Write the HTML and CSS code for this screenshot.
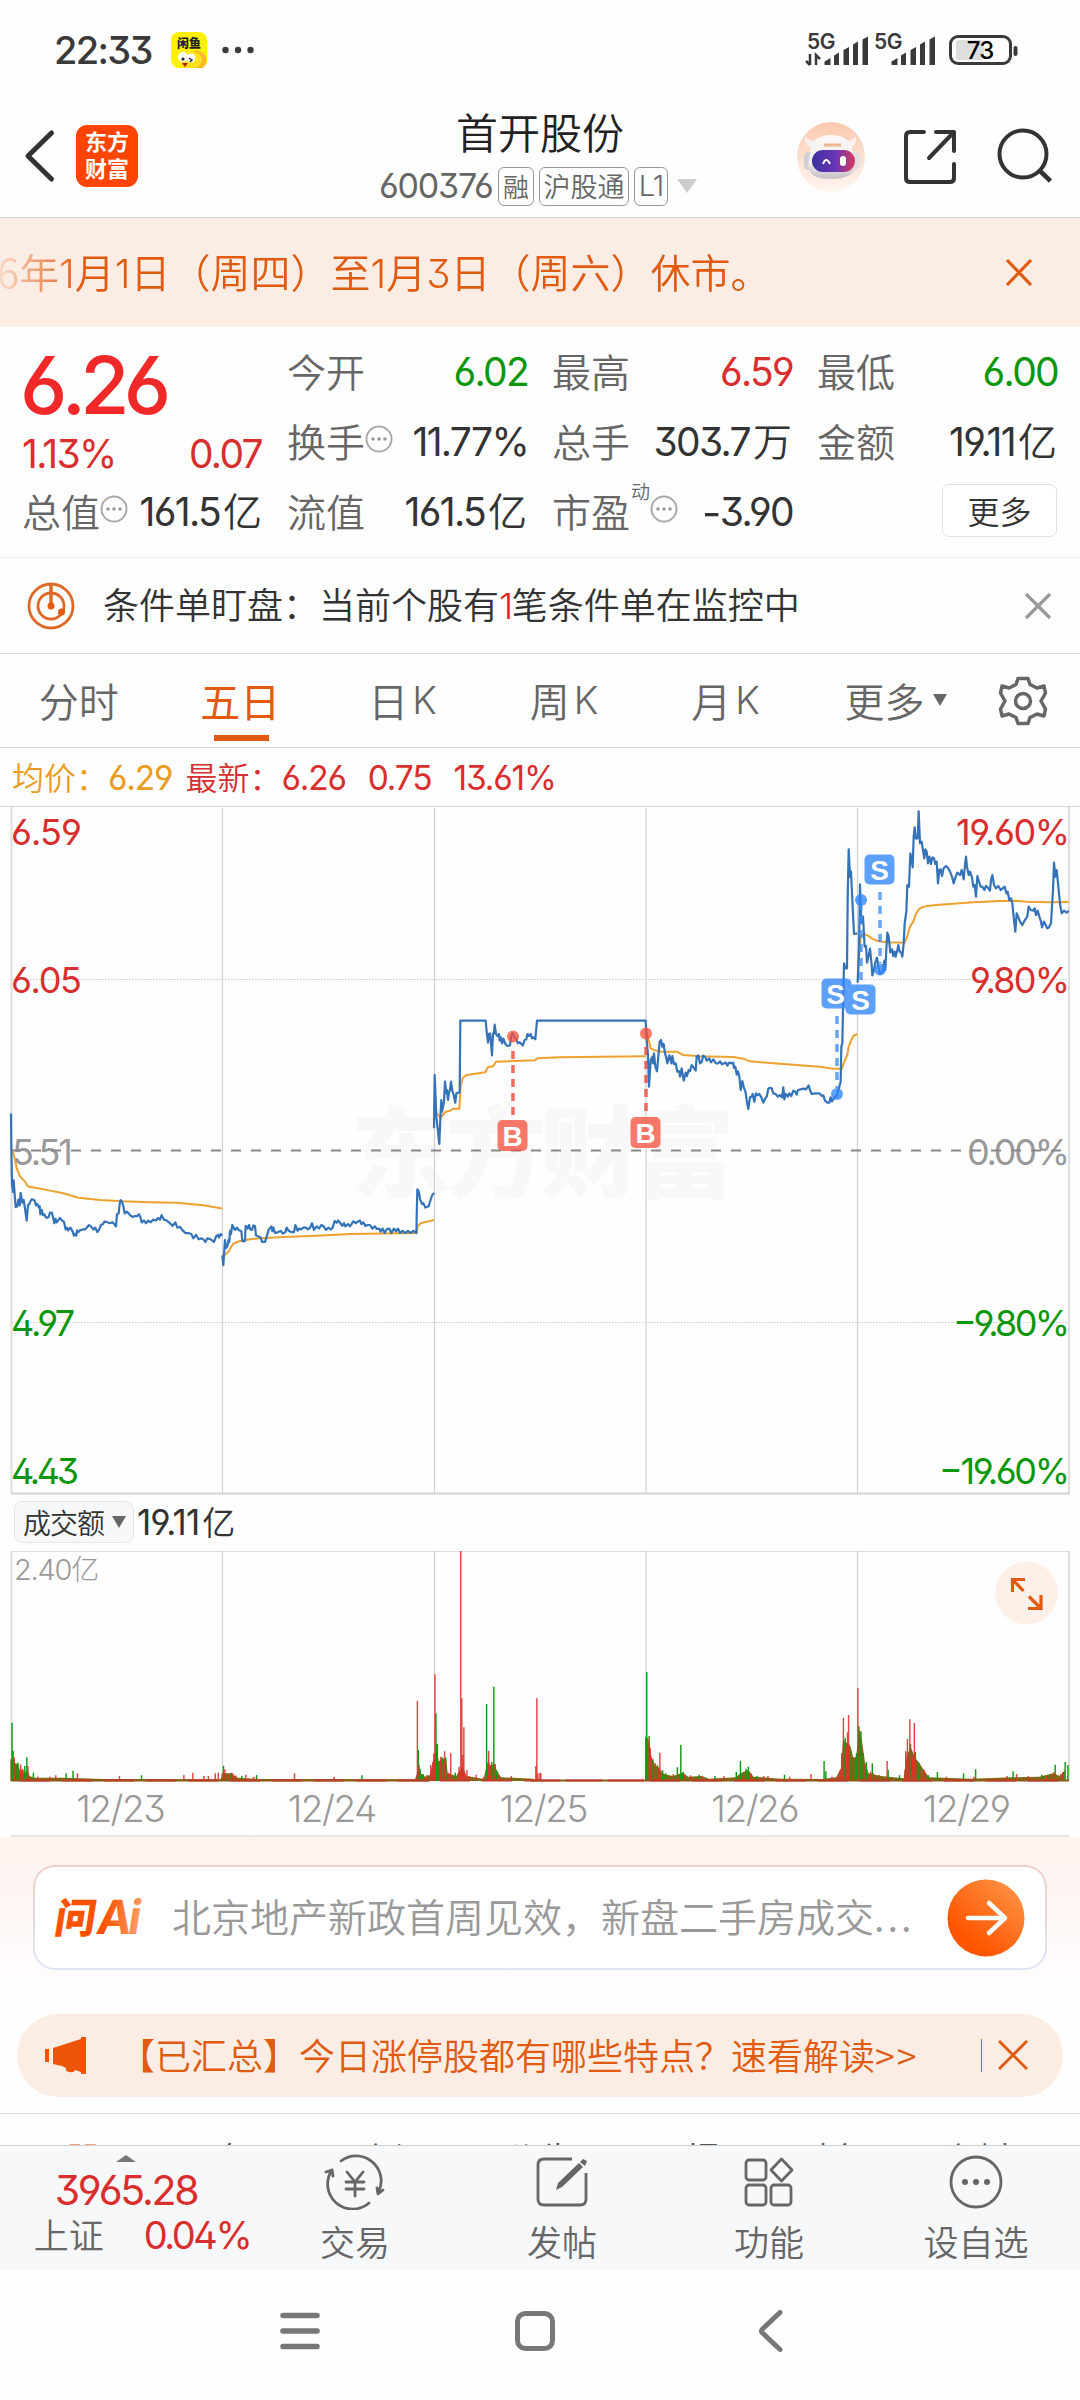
FILE: index.html
```html
<!DOCTYPE html>
<html lang="zh-CN">
<head>
<meta charset="utf-8">
<title>首开股份 600376</title>
<link rel="stylesheet" href="styles.css">
</head>
<body>
<div class="status">
  <span class="clock n">22:33</span>
  <svg class="app" width="36" height="36" viewBox="0 0 36 36"><rect width="36" height="36" rx="8" fill="#fff100"/><path d="M22 19a10 10 0 0 1 10 17H12z" fill="#ffb81f"/><ellipse cx="20" cy="28" rx="11" ry="9" fill="#ffe21a"/><circle cx="12" cy="25" r="5" fill="#fff"/><circle cx="20" cy="26" r="4.500" fill="#fff"/><circle cx="12" cy="27" r="1.600" fill="#222"/><path d="M18 26l3 2-2 2" stroke="#222" fill="none" stroke-width="1.400"/><path d="M11 31h6l-3 4z" fill="#b3200c"/><text x="18" y="15.500" text-anchor="middle" class="app-name">闲鱼</text></svg>
  <svg class="dots" width="32" height="8" viewBox="0 0 32 8"><g fill="#3a3a3a"><circle cx="3.500" cy="4" r="3.200"/><circle cx="16" cy="4" r="3.200"/><circle cx="28.500" cy="4" r="3.200"/></g></svg>
  <svg class="signals" width="220" height="40" viewBox="803 30 220 40">
    <g fill="#3a3a3a">
      <text x="807" y="48.500" class="fiveg">5G</text><text x="874" y="48.500" class="fiveg">5G</text>
      <path d="M810 54v11M806 61l4 4M816 65V55l4 4" stroke="#3a3a3a" stroke-width="2.500" fill="none"/>
      <path id="bars" d="M824.500 65v-3.500l6-3.500v7zM834 65V55.500l5-3V65zM843.500 65V50l5.500-3v18zM853 65V44.500l5-3V65zM862.500 65V39.500l5.500-3V65z"/>
      <use href="#bars" x="67"/>
    </g>
    <rect x="956" y="40" width="28" height="20" rx="3" fill="#dedede"/>
    <rect x="950.500" y="36.500" width="60" height="27" rx="7.500" fill="none" stroke="#3a3a3a" stroke-width="3"/>
    <rect x="1013.500" y="46" width="4" height="10" rx="2" fill="#3a3a3a"/>
    <text x="980" y="59" text-anchor="middle" class="batt">73</text>
  </svg>
</div>

<header class="head">
  <svg class="back" width="32" height="54" viewBox="0 0 32 54"><path d="M27.500 4 4 27l23.500 23" fill="none" stroke="#333" stroke-width="5" stroke-linecap="round" stroke-linejoin="round"/></svg>
  <div class="logo">东方<br>财富</div>
  <div class="title">
    <h1>首开股份</h1>
    <div class="code"><span class="n">600376</span><i class="t1">融</i><i class="t2">沪股通</i><i class="t3 n">L1</i><svg width="20" height="14" viewBox="0 0 20 14"><path d="M0 0h20L10 14z" fill="#ccc"/></svg></div>
  </div>
  <svg class="robot" width="68" height="70" viewBox="0 0 68 70">
    <defs><linearGradient id="rb" x2="0" y2="1"><stop stop-color="#fdc9ae"/><stop offset="1" stop-color="#fff6f2"/></linearGradient><linearGradient id="face"><stop stop-color="#3b2f9e"/><stop offset=".55" stop-color="#6a35b8"/><stop offset="1" stop-color="#d83a5c"/></linearGradient><linearGradient id="shell" x2="0" y2="1"><stop stop-color="#fbf8f7"/><stop offset=".6" stop-color="#f3efef"/><stop offset="1" stop-color="#c4bfc6"/></linearGradient></defs>
    <ellipse cx="34" cy="35" rx="34" ry="35" fill="url(#rb)"/>
    <path d="M8 14q-1 9 6 12l7-7q-9 1-13-5zM59 14q1 9-6 12l-7-7q9 1 13-5z" fill="#f7f2f1"/>
    <rect x="7" y="30" width="9" height="18" rx="4.500" fill="#d3ced6"/><rect x="54" y="30" width="9" height="18" rx="4.500" fill="#e3dee2"/>
    <path d="M13 32q1-19 21-19t22 19l3 11q-2 14-25 14T11 43z" fill="url(#shell)"/>
    <rect x="15" y="28" width="43" height="22" rx="11" fill="url(#face)"/>
    <path d="M26 42q3-8 7 0" fill="none" stroke="#fff" stroke-width="2"/><rect x="43" y="34" width="6" height="10" rx="3" fill="#fff"/>
    <path d="M27 23h17" stroke="#e9b78c" stroke-width="3"/>
  </svg>
  <svg class="share" width="56" height="58" viewBox="902 128 56 58"><path d="M924 132h-14q-4 0-4 4v42q0 4 4 4h40q4 0 4-4v-14M936 132h18v19M954 132l-25 26" fill="none" stroke="#333" stroke-width="4" stroke-linecap="round" stroke-linejoin="round"/></svg>
  <svg class="search" width="58" height="58" viewBox="996 128 58 58"><circle cx="1023" cy="154" r="23.500" fill="none" stroke="#333" stroke-width="4"/><path d="M1039 170l11.500 11" stroke="#333" stroke-width="4.500"/></svg>
</header>

<div class="notice"><p>6年<b class="n">1</b>月<b class="n">1</b>日（周四）至<b class="n">1</b>月<b class="n">3</b>日（周六）休市。</p>
  <svg width="30" height="30" viewBox="0 0 30 30"><path d="M3 2l24 25M27 2 3 27" stroke="#e05a10" stroke-width="3.200"/></svg></div>

<section class="quote">
  <div class="col c1">
    <strong class="price n">6.26</strong>
    <div class="row r2"><span class="red n">1.13%</span><span class="red n">0.07</span></div>
    <div class="row"><span>总值</span><svg class="info" viewBox="0 0 28 28"><use href="#inf"/></svg><span class="v"><b class="n">161.5</b>亿</span></div>
  </div>
  <div class="col">
    <div class="row"><span>今开</span><span class="v green n">6.02</span></div>
    <div class="row"><span>换手</span><svg class="info" viewBox="0 0 28 28"><g id="inf"><circle cx="14" cy="14" r="12.500" fill="none" stroke="#aaa" stroke-width="2"/><g fill="#999"><circle cx="8" cy="14" r="1.800"/><circle cx="14" cy="14" r="1.800"/><circle cx="20" cy="14" r="1.800"/></g></g></svg><span class="v n">11.77%</span></div>
    <div class="row"><span>流值</span><span class="v"><b class="n">161.5</b>亿</span></div>
  </div>
  <div class="col">
    <div class="row"><span>最高</span><span class="v red n">6.59</span></div>
    <div class="row"><span>总手</span><span class="v"><b class="n">303.7</b>万</span></div>
    <div class="row"><span>市盈</span><sup>动</sup><svg class="info" viewBox="0 0 28 28"><use href="#inf"/></svg><span class="v n"><i class="neg">−</i>3.90</span></div>
  </div>
  <div class="col">
    <div class="row"><span>最低</span><span class="v green n">6.00</span></div>
    <div class="row"><span>金额</span><span class="v"><b class="n">19.11</b>亿</span></div>
    <div class="row"><button class="more">更多</button></div>
  </div>
</section>

<div class="alert">
  <svg width="48" height="48" viewBox="0 0 48 48"><g fill="none" stroke="#dc6a26" stroke-width="2.800"><circle cx="24" cy="24" r="22"/><circle cx="24" cy="24" r="13"/></g><path d="M24 2v22" stroke="#dc6a26" stroke-width="3.500"/><circle cx="24" cy="24" r="3.500" fill="#e05a10"/><circle cx="34.500" cy="30" r="3.500" fill="#e05a10"/></svg>
  <p>条件单盯盘：当前个股有<em class="n">1</em>笔条件单在监控中</p>
  <svg width="28" height="28" viewBox="0 0 28 28"><path d="M2 2l24 24M26 2 2 26" stroke="#999" stroke-width="3.200"/></svg>
</div>

<nav class="tabs">
  <span>分时</span><span class="on">五日</span><span>日<b class="n">K</b></span><span>周<b class="n">K</b></span><span>月<b class="n">K</b></span><span>更多<svg width="14" height="12" viewBox="0 0 14 12"><path d="M0 0h14L7 12z" fill="#666"/></svg></span>
  <svg class="gear" width="50" height="50" viewBox="-25 -25 50 50"><g fill="none" stroke="#666" stroke-width="3.500" stroke-linejoin="round"><path d="M-5-22.500H5L7-16.500 14-13l7-2 1.500 7-4.500 8 4.500 8L21 15l-7-2-7 3.500-2 6H-5l-2-6-7-3.500-7 2-1.500-7 4.500-8-4.500-8L-21-15l7 2 7-3.500z"/><circle r="7.500"/></g></svg>
</nav>

<div class="legend"><span class="avg">均价：<b class="n">6.29</b></span><span class="last">最新：<b class="n">6.26</b><b class="n">0.75</b><b class="n">13.61%</b></span></div>

<svg class="chart" width="1080" height="690" viewBox="0 806 1080 690">
  <text x="543" y="1190" class="mark" text-anchor="middle" textLength="384">东方财富</text>
  <path d="M0 806.500H1080" stroke="#d6d6d6"/>
  <path d="M11.500 807V1494M1069 807V1494" stroke="#ddd" stroke-width="2"/>
  <path d="M222.500 808V1493M434.500 808V1493M646 808V1493M857.500 808V1493" stroke="#d0d0d0" stroke-width="1.200"/>
  <path d="M11 1493.500H1070" stroke="#d3d3d3" stroke-width="2"/>
  <path d="M12 979.500H1068M12 1322.500H1068" stroke="#ccc" stroke-dasharray="1.500 1.500"/>
  <g class="lbl">
    <g fill="#d92e2e"><text x="11" y="845" textLength="71">6.59</text><text x="11" y="993" textLength="71">6.05</text><text x="956" y="845" textLength="114">19.60%</text><text x="970" y="993" textLength="100">9.80%</text></g>
    <g fill="#999"><text x="12" y="1165" textLength="61">5.51</text><text x="967" y="1165" textLength="103">0.00%</text></g>
    <g fill="#0c960c"><text x="11" y="1336" textLength="64">4.97</text><text x="11" y="1484" textLength="68">4.43</text><text x="953" y="1336" textLength="117">−9.80%</text><text x="939" y="1484" textLength="131">−19.60%</text></g>
  </g>
  <path d="M11 1150.500H1068" stroke="#888" stroke-width="2" stroke-dasharray="10 10"/>
  <g fill="none" stroke-linejoin="round">
    <g stroke="#eda12f" stroke-width="2">
      <g transform="translate(0 800) scale(.33333 .44643)">
        <path class="ln" d="M33 780Q42 790 50 825L60 843 76 856 84 866 110 869 150 875 190 881 235 891 300 896 370 899 450 901 530 902 570 905 610 908 667 915M667 1020 676 1018 685 1012 692 1003 700 994 715 989 740 985 770 982 850 979 950 976 1050 972 1250 970 1253 955 1262 948 1302 941"/>
      </g>
      <path class="ln" transform="translate(420 900) scale(.33333)" d="M50 640 62 653 76 636 90 632 100 626 118 626 122 560 128 535 138 526 160 522 196 517 204 502 220 498 228 485 345 481 352 475 420 472 677 469M680 400 686 420 692 445 702 450 720 455 770 455 790 465 840 469 940 471 970 476 990 484 1060 490 1200 500 1240 506 1266 506 1275 480 1282 465 1286 440 1292 425 1300 408 1312 402"/>
      <path class="ln" transform="translate(740 790) scale(.33333)" d="M354 560 357 500 362 440 372 432 384 437 395 445 410 452 440 457 494 458 503 435 510 410 520 395 526 375 536 358 550 350 580 346 640 341 700 337 780 333 820 332 860 335 930 337 986 336"/>
    </g>
    <g stroke="#3573b9" stroke-width="2.200">
      <path class="ln" transform="translate(0 800) scale(.33333 .44643)" d="M33 702 34 780 36 860 39 878 41 852 44 884 47 912 52 910 55 895 59 908 62 880 67 902 71 896 75 915 80 942 84 908 88 905 92 898 96 894 104 897 108 908 112 905 117 913 119 910 121 928 125 918 129 930 133 928 136 933 140 936 146 934 150 924 156 925 160 938 163 948 166 938 170 946 176 940 180 936 186 942 192 945 197 962 201 958 204 964 211 958 217 965 222 976 225 972 229 976 231 964 235 968 240 964 248 962 255 962 260 958 267 952 274 956 280 962 286 958 292 968 297 963 303 952 309 950 314 944 322 946 330 948 338 946 345 952 348 955 351 928 356 926 359 905 362 896 366 900 370 910 374 926 380 922 386 926 390 930 398 934 405 932 412 932 417 928 421 934 425 946 432 942 438 948 445 942 452 946 460 940 468 942 474 936 480 940 485 930 492 940 500 942 510 948 518 954 526 946 532 958 540 956 548 964 556 970 565 970 574 972 580 982 588 974 596 984 604 982 610 984 616 990 622 982 632 984 642 990 648 978 654 974 657 980 662 972 667 976M667 1020 670 1042 675 986 678 1004 682 1000 686 985 688 990 690 965 693 972 697 952 701 958 705 963 711 958 716 963 724 966 727 988 735 988 737 954 743 960 747 952 751 962 756 963 760 953 765 955 768 975 774 977 782 980 786 990 795 990 800 978 806 963 814 955 817 966 820 958 825 970 835 968 842 965 848 971 856 968 860 958 866 965 875 968 882 968 886 952 893 965 897 960 903 962 910 958 918 958 924 962 930 958 936 948 942 963 950 955 957 960 964 952 972 956 978 963 985 958 992 962 998 958 1004 943 1010 947 1015 942 1020 947 1027 954 1032 948 1036 955 1044 950 1050 955 1060 944 1068 948 1074 944 1080 942 1084 950 1090 946 1096 954 1104 952 1110 952 1117 960 1124 955 1131 961 1138 960 1142 967 1148 960 1154 970 1161 961 1168 960 1174 970 1182 960 1188 966 1194 960 1200 970 1208 965 1216 970 1224 965 1232 970 1240 965 1249 970 1252 872 1256 876 1260 894 1266 905 1270 903 1276 913 1286 910 1290 900 1296 886 1302 880"/>
      <path class="ln" transform="translate(420 900) scale(.33333)" d="M42 685 44 525 49 650 58 732 61 655 64 600 66 635 72 605 75 545 79 580 81 570 84 600 87 578 90 570 93 545 97 572 101 585 106 608 109 580 114 578 119 578 121 362 197 362 200 395 204 428 207 402 210 400 213 430 216 466 219 400 222 400 224 374 228 402 232 408 237 402 239 422 242 412 246 430 250 416 256 432 262 438 270 436 273 410 278 400 283 412 288 416 294 430 300 427 308 437 314 420 319 418 322 402 327 408 332 402 336 415 340 412 346 418 351 362 677 362 680 420 684 465 687 560 692 480 697 470 699 490 702 460 706 500 711 514 715 470 719 425 723 420 727 440 731 432 735 460 738 470 742 490 748 466 754 490 757 468 762 492 767 490 772 515 778 514 780 530 785 505 791 542 797 518 801 528 806 510 810 514 815 495 821 503 827 512 830 470 835 466 840 490 846 485 849 467 855 470 860 482 868 475 873 487 880 478 888 490 895 490 900 484 906 493 912 490 918 488 922 497 928 488 936 490 940 488 942 504 946 500 950 524 954 514 958 530 962 570 967 543 972 564 977 578 980 600 985 627 990 592 995 590 998 582 1003 605 1008 580 1012 585 1018 582 1024 592 1030 608 1036 595 1040 590 1045 566 1050 563 1055 565 1060 580 1067 582 1074 590 1080 585 1086 592 1090 562 1093 598 1098 582 1104 590 1108 580 1114 588 1120 572 1126 575 1130 584 1134 570 1142 568 1150 566 1158 568 1166 556 1170 570 1175 582 1186 580 1198 580 1206 588 1210 586 1215 602 1222 608 1228 608 1232 592 1236 604 1242 594 1250 588 1258 560 1262 545 1264 440 1267 430 1269 330 1272 190 1276 205 1281 205 1283 0 1286-152 1290-70 1293-85 1297 0 1302 102 1312 100"/>
      <path class="ln" transform="translate(740 790) scale(.33333)" d="M353 578 357 480 360 283 364 400 369 380 374 470 378 468 381 518 385 500 390 476 395 525 397 556 402 540 405 520 411 503 415 530 420 552 428 545 433 512 436 540 439 480 442 428 446 440 451 487 456 478 460 498 464 485 467 500 472 480 475 465 479 485 484 488 487 500 491 460 494 400 499 365 502 285 507 290 511 190 515 210 518 232 521 140 524 112 527 145 533 145 536 64 540 160 545 155 549 180 553 205 556 178 560 185 564 220 568 200 573 222 577 202 582 205 586 222 590 215 594 280 598 240 602 238 606 258 611 235 618 228 625 235 630 245 636 260 641 280 646 262 652 248 660 255 665 240 671 268 675 225 678 200 681 230 686 255 690 245 696 262 700 290 704 285 708 320 712 258 717 275 722 290 727 290 733 300 738 288 745 295 750 302 753 270 757 255 762 285 768 295 775 288 782 300 788 295 794 290 799 310 803 305 808 330 813 325 817 340 822 390 826 425 830 370 834 378 838 390 842 398 847 405 852 395 858 385 862 380 866 350 872 360 880 362 884 355 888 375 893 362 898 380 903 395 906 412 912 395 917 405 922 415 927 412 933 400 936 350 939 300 942 218 946 260 950 240 955 290 960 340 965 370 972 362 980 368 986 362"/>
    </g>
  </g>
  <g class="buy"><path d="M513 1051V1116M646 1047V1113" class="stem"/><circle cx="513" cy="1036.500" r="6"/><circle cx="646" cy="1033.500" r="6"/><rect x="497.500" y="1120" width="30" height="31" rx="5"/><rect x="630.500" y="1117" width="30" height="31" rx="5"/></g>
  <g class="sell"><path d="M837 1016V1088M861 980V906M880 892V963" class="stem"/><circle cx="837" cy="1094" r="6"/><circle cx="861" cy="900" r="6"/><circle cx="880" cy="969.500" r="6"/><rect x="821.500" y="978.500" width="30" height="30" rx="5"/><rect x="845.500" y="984.500" width="30" height="30" rx="5"/><rect x="864.500" y="854.500" width="30" height="30" rx="5"/></g>
  <g class="mk"><text x="512.500" y="1145.500">B</text><text x="645.500" y="1143">B</text><text x="835.500" y="1004">S</text><text x="860.500" y="1010">S</text><text x="879.500" y="880">S</text></g>
</svg>

<div class="volbar"><button>成交额<svg width="14" height="12" viewBox="0 0 14 12"><path d="M0 0h14L7 12z" fill="#666"/></svg></button><span><b class="n">19.11</b>亿</span></div>

<div class="vol">
<svg width="1080" height="232" viewBox="0 1551 1080 232">
  <path d="M11 1551.500H1070" stroke="#ddd"/>
  <path d="M11.500 1551V1781M1069 1551V1781" stroke="#ddd" stroke-width="2"/>
  <path d="M222.500 1551V1781M434.500 1551V1781M646 1551V1781M857.500 1551V1781" stroke="#d0d0d0" stroke-width="1.200"/>
  <g transform="translate(0 1480) scale(.34437 .33333)">
    <path fill="#7d6a14" d="M30 903V838H42L45 855 52 850 58 872 66 868 70 880 80 870 86 888 100 893 190 893 300 897 640 898 650 880 670 880 690 893 750 897 1205 898 1216 865 1224 882 1235 890 1248 885 1256 850 1268 800 1274 845 1284 835 1296 838 1300 880 1325 888 1335 870 1345 860 1354 888 1405 897 1412 860 1418 840 1424 858 1436 852 1444 875 1455 892 1550 896V903z"/>
    <path class="g" d="M35 903V728M38 903V812M46 903V850M52 903V848M72 903V858M78 903V832M97 903V878M192 903V880M212 903V872M411 903V886M649 903V857M672 903V878M702 903V888M745 903V885M1051 903V886M1215 903V810M1220 903V866M1229 903V882M1266 903V700M1270 903V792M1276 903V842M1284 903V832M1294 903V832M1322 903V878M1413 903V672M1428 903V846M1434 903V620M1443 903V872"/>
    <path class="r" d="M41 903V832M60 903V853M66 903V868M81 903V858M110 903V890M145 903V890M162 903V886M225 903V880M347 903V888M534 903V885M560 903V878M592 903V888M605 903V888M625 903V880M634 903V878M645 903V880M653 903V868M666 903V882M676 903V880M685 903V886M714 903V884M737 903V890M855 903V880M970 903V890M1212 903V662M1217 903V855M1240 903V885M1251 903V855M1257 903V846M1260 903V820M1263 903V583M1280 903V830M1287 903V850M1291 903V814M1302 903V878M1309 903V820M1333 903V860M1338 903V213M1341 903V655M1344 903V825M1347 903V742M1350 903V880M1356 903V870M1363 903V888M1383 903V884M1404 903V890M1419 903V812M1423 903V855M1438 903V852M1449 903V885M1485 903V888M1556 903V858M1559 903V655M1562 903V880M1568 903V880"/>
  </g>
  <g transform="translate(540 1480) scale(.34437 .33333)">
    <path fill="#7d6a14" d="M305 903V768L318 790 324 835 334 855 345 865 360 882 385 888 415 878 430 890 470 888 490 896 568 892 585 878 605 870 620 890 700 896 820 897 860 892 874 865 880 780 892 790 902 800 910 835 918 830 928 745 936 790 944 850 954 880 990 888 1056 895 1064 830 1076 800 1090 835 1102 850 1116 872 1130 892 1250 896 1370 892 1450 890 1490 880 1510 888 1524 870V903z"/>
    <path class="g" d="M310 903V576M317 903V768M328 903V838M341 903V856M356 903V870M365 903V880M399 903V862M409 903V794M416 903V876M462 903V884M508 903V888M570 903V876M582 903V843M598 903V866M605 903V860M630 903V888M710 903V884M825 903V843M830 903V874M886 903V774M898 903V794M904 903V832M911 903V832M919 903V820M926 903V738M932 903V754M939 903V820M948 903V846M965 903V850M1011 903V870M1044 903V886M1076 903V792M1090 903V816M1100 903V848M1128 903V886M1154 903V876M1230 903V880M1265 903V868M1374 903V874M1457 903V884M1496 903V854M1525 903V846M1533 903V855"/>
    <path class="r" d="M2 903V878M313 903V774M320 903V805M324 903V832M335 903V850M345 903V862M348 903V818M387 903V882M420 903V882M437 903V886M470 903V888M534 903V888M612 903V880M650 903V888M662 903V888M725 903V890M787 903V882M848 903V890M865 903V888M872 903V870M876 903V820M881 903V714M889 903V800M893 903V757M896 903V705M923 903V624M944 903V852M960 903V875M968 903V880M985 903V885M1008 903V843M1060 903V870M1062 903V814M1067 903V777M1071 903V830M1074 903V718M1082 903V830M1087 903V729M1096 903V843M1108 903V870M1116 903V870M1180 903V890M1260 903V890M1356 903V888M1384 903V882M1418 903V888M1472 903V888M1492 903V876M1512 903V882M1519 903V876"/>
  </g>
  <path d="M11 1780.500H430M530 1780.500H1069" stroke="#8c5a14" stroke-width="2"/><path d="M530 1780.500H645M20 1780.500H1069" stroke="#c03a28" stroke-width="2" stroke-dasharray="30 12"/>
  <text x="14" y="1580" class="vmax"><tspan class="vn">2.40</tspan>亿</text>
  <circle cx="1026.500" cy="1593" r="31.500" fill="#fef0e8"/>
  <path d="M1012.500 1592V1579.500H1025M1013 1580l10.500 11M1028 1608.500H1041V1595M1040 1607.500l-11-11" fill="none" stroke="#e05a10" stroke-width="3.200"/>
</svg>
<div class="dates n"><span>12/23</span><span>12/24</span><span>12/25</span><span>12/26</span><span>12/29</span></div>
</div>

<section class="promo">
  <div class="ask">
    <svg class="ailogo" width="92" height="46" viewBox="0 0 92 46"><defs><linearGradient id="ag" gradientUnits="userSpaceOnUse" x1="0" y1="0" x2="90" y2="0"><stop offset=".6" stop-color="#ff5200"/><stop offset="1" stop-color="#ff9a62"/></linearGradient></defs><g transform="skewX(-9)" fill="url(#ag)"><text x="6" y="38" class="ai">问</text><text x="48" y="38.500" class="ai-en" textLength="44">Ai</text></g></svg>
    <p>北京地产新政首周见效，新盘二手房成交<span>...</span></p>
    <svg width="78" height="78" viewBox="0 0 78 78"><defs><linearGradient id="go" x1="1" y1="0" x2=".3" y2=".8"><stop stop-color="#ff9a4d"/><stop offset="1" stop-color="#ff5500"/></linearGradient></defs><circle cx="39" cy="39" r="38.500" fill="url(#go)"/><path d="M21 39h37M42 24l16 15-16 15" fill="none" stroke="#fff" stroke-width="4.500" stroke-linecap="round" stroke-linejoin="round"/></svg>
  </div>
  <div class="hot">
    <svg class="horn" width="42" height="38" viewBox="0 0 42 38"><path d="M0 12h4v13H0zM8 11 36 2V0h5v37h-5v-2l-6-2q-1 3-5 2-5 0-4-4l-4-2-9-2z" fill="#ec5406"/></svg>
    <p>【已汇总】今日涨停股都有哪些特点？速看解读<span>&gt;&gt;</span></p>
    <i></i>
    <svg width="30" height="32" viewBox="0 0 30 32"><path d="M1 1l28 28M29 1 1 29" stroke="#e05a10" stroke-width="3"/></svg>
  </div>
</section>

<div class="peek"><span class="cur">股吧</span><span>盘口</span><span>资讯</span><span>公告</span><span>研报</span><span>财务</span><span>资料</span></div>

<footer class="dock">
  <div class="index">
    <svg width="20" height="7" viewBox="0 0 20 7"><path d="M10 0l10 7H0z" fill="#777"/></svg>
    <b class="n">3965.28</b>
    <div><span>上证</span><b class="n">0.04%</b></div>
  </div>
  <div class="act"><svg width="62" height="56" viewBox="-31 -28 62 56"><g fill="none" stroke="#666" stroke-width="2.800" stroke-linecap="round" stroke-linejoin="round"><path d="M-14-21A25 25 0 0 1 24 9M14 21A25 25 0 0 1-23-12M-29-10l6-2 1 6M28 8l-5 4-1-6M-8-10l8 10 8-10M0 0v14M-9 0H9M-9 7H9"/></g></svg><span>交易</span></div>
  <div class="act"><svg width="62" height="56" viewBox="-31 -28 62 56"><g fill="none" stroke="#666" stroke-width="2.800"><path d="M10-23h-28q-6 0-6 6v34q0 6 6 6h36q6 0 6-6V-9"/></g><path d="M-6 8l2-7 21-20 4 4L0 5zM18-20l3-3 4 2-2 5z" fill="#666"/></svg><span>发帖</span></div>
  <div class="act"><svg width="62" height="56" viewBox="-31 -28 62 56"><g fill="none" stroke="#666" stroke-width="2.800"><rect x="-23" y="-22" width="20" height="20" rx="3"/><rect x="-23" y="3" width="20" height="20" rx="3"/><rect x="2" y="3" width="20" height="20" rx="3"/><path d="M12.500-23 23-12 12.500-1 2-12z" stroke-linejoin="round"/></g></svg><span>功能</span></div>
  <div class="act"><svg width="62" height="56" viewBox="-31 -28 62 56"><circle r="25" fill="none" stroke="#666" stroke-width="2.800"/><g fill="#666"><circle cx="-11" r="3"/><circle r="3"/><circle cx="11" r="3"/></g></svg><span>设自选</span></div>
</footer>

<div class="sysnav">
  <svg width="40" height="44" viewBox="0 0 40 44"><path d="M3 6.500h34M3 22h34M3 37.500h34" stroke="#777" stroke-width="5.500" stroke-linecap="round"/></svg>
  <svg width="40" height="44" viewBox="0 0 40 44"><rect x="2.500" y="4.500" width="35" height="35" rx="8" fill="none" stroke="#777" stroke-width="5"/></svg>
  <svg width="40" height="44" viewBox="0 0 40 44"><path d="M30 3.500 12.500 20q-2 2 0 4L30 40.500" fill="none" stroke="#777" stroke-width="5" stroke-linecap="round"/></svg>
</div>
</body>
</html>
```

FILE: styles.css
```css
* { box-sizing: border-box; margin: 0; padding: 0; }
body { width: 1080px; height: 2400px; overflow: hidden; background: #fefefe; color: #333; font-family: "Noto Sans CJK SC", sans-serif; font-weight: 350; line-height: 1; }
svg { display: block; flex: none; }
b, i, em { font-weight: inherit; font-style: normal; }
button { font: inherit; color: inherit; }
.n { font-family: Inter, "Noto Sans CJK SC", sans-serif; font-feature-settings: "ss01"; letter-spacing: -.04em; font-weight: 350; }
.red { color: #d92e2e; }
.green { color: #0c960c; }

.status { height: 100px; padding: 32px 57px 0 54px; display: flex; align-items: flex-start; }
.clock { width: 117px; font-size: 38px; line-height: 36px; color: #3a3a3a; letter-spacing: -.045em; font-weight: 450; }
.dots { margin: 14px 0 0 15px; }
.signals { margin: -2px 0 0 auto; }
.app-name { font: 900 12px "Noto Sans CJK SC"; fill: #222; }
.fiveg { font: 600 21px Inter; letter-spacing: -.5px; }
.batt { font: 450 24px Inter; letter-spacing: -1px; }

.head { height: 118px; border-bottom: 1px solid #d5d5d5; display: flex; align-items: flex-start; }
.back { margin: 29px 0 0 24px; }
.logo { width: 62px; height: 62px; margin: 25px 0 0 20px; border-radius: 11px; background: #ff4400; color: #fff; font-size: 22px; font-weight: 700; line-height: 27px; text-align: center; padding-top: 2px; }
.title { width: 350px; margin-left: 229px; }
h1 { font-weight: 350; font-size: 42px; line-height: 42px; padding: 10px 0 0 89px; color: #222; }
.code { display: flex; align-items: center; height: 40px; margin-top: 14px; color: #666; font-size: 28px; padding-left: 12px; }
.code .n { font-size: 34px; width: 119px; font-weight: 400; letter-spacing: -.035em; }
.code i, .code i.n { height: 39px; line-height: 35px; border: 1.500px solid #999; border-radius: 6px; text-align: center; margin-right: 5px; font-size: 26px; }
.code .t1 { width: 36px; }
.code .t2 { width: 90px; font-size: 27px; }
.code i.t3 { width: 34px; font-size: 29px; margin-right: 9px; font-weight: 350; }
.robot { margin: 22px 0 0 80px; }
.share { margin: 28px 0 0 37px; }
.search { margin: 28px 0 0 38px; }

.notice { height: 109px; background: #fcede4; color: #e05a10; display: flex; align-items: center; justify-content: space-between; padding-right: 46px; overflow: hidden; }
.notice p { font-size: 40px; line-height: 50px; padding-bottom: 1px; white-space: nowrap; margin-left: -3px; -webkit-mask: linear-gradient(90deg, rgba(0,0,0,.1), #000 85px); mask: linear-gradient(90deg, rgba(0,0,0,.1), #000 85px); }
.notice b { letter-spacing: 0; font-weight: 350; }

.quote { height: 231px; padding: 9px 23px 0 22px; display: grid; grid-template-columns: repeat(4, 240px); justify-content: space-between; border-bottom: 1px solid #ececec; }
.row { height: 70px; padding-bottom: 1px; display: flex; align-items: center; color: #666; font-size: 39px; }
.row .n { font-size: 39px; font-weight: 400; letter-spacing: -.043em; }
.row > .n { padding-top: 2px; }
.row .v { margin-left: auto; color: #333; white-space: nowrap; }
.row .v.n { margin-right: -1px; }
.row .v.red { color: #d92e2e; }
.row .v.green { color: #0c960c; }
.v b { margin-right: 3px; }
.neg { display: inline-block; transform: scaleX(.75); transform-origin: right; }
.price { display: block; height: 83px; margin-left: -2px; font-size: 80px; line-height: 97px; color: #f02828; font-weight: 500; letter-spacing: -.072em; }
.row.r2 { height: 57px; padding: 9px 0 0; justify-content: space-between; }
.row.r2 .red { color: #d92e2e; }
.info { width: 28px; height: 28px; margin: 0 0 4px 0; }
.row sup { font-size: 19px; align-self: flex-start; margin: 5px 0 0 1px; }
.more { width: 115px; height: 53px; margin-left: auto; border: 1.500px solid #e2e2e2; border-radius: 7px; background: #fff; font-size: 32px; color: #333; padding-bottom: 2px; }

.alert { height: 96px; border-bottom: 1px solid #d8d8d8; display: flex; align-items: center; padding: 0 28px 0 27px; font-size: 36px; }
.alert p { margin-left: 28px; flex: 1; white-space: nowrap; padding-bottom: 2px; }
.alert em { color: #e02020; }

.tabs { height: 94px; border-bottom: 1px solid #d8d8d8; display: flex; align-items: center; font-size: 40px; color: #666; }
.tabs span { width: 161.500px; height: 93px; padding: 0 4px 2px 0; display: flex; align-items: center; justify-content: center; }
.tabs span b { margin-left: 4px; font-size: 38px; }
.tabs span:nth-child(6) { width: 184px; padding-right: 8px; }
.tabs span svg { margin-left: 8px; }
.tabs .on { color: #e05a10; font-weight: 400; background: linear-gradient(#e05a10, #e05a10) 52px 81px / 55px 6px no-repeat; }
.gear { margin-left: 6px; }

.legend { height: 58px; display: flex; align-items: center; padding: 1px 0 0 12px; font-size: 32px; white-space: nowrap; }
.legend .avg { color: #eb9b20; }
.legend .last { color: #d92e2e; margin-left: 13px; }
.legend .last b + b { margin-left: 22px; }
.legend .n { font-size: 33.500px; letter-spacing: -.035em; font-weight: 400; }

.chart { height: 690px; }
.mark { font: 900 100px "Noto Sans CJK SC"; fill: #f8f8f8; }
.lbl text { font: 400 36px Inter; font-feature-settings: "ss01"; }
.ln { vector-effect: non-scaling-stroke; }
.buy { fill: #f94d38; opacity: .75; }
.sell { fill: #2f86fb; opacity: .78; }
.stem { fill: none; stroke-width: 3.500; stroke-dasharray: 8 6; }
.buy .stem { stroke: #ee3b2e; }
.sell .stem { stroke: #3e8cf0; }
.mk text { font: 700 28px "Liberation Sans"; fill: #fff; text-anchor: middle; }

.volbar { height: 55px; padding: 5px 0 0 14px; display: flex; align-items: flex-start; font-size: 33px; }
.volbar button { width: 120px; height: 42px; border: 1.500px solid #e4e5e9; border-radius: 8px; background: #f7f8fa; display: flex; align-items: center; gap: 8px; padding-left: 8px; font-size: 28px; letter-spacing: -1px; }
.volbar span { margin: 4px 0 0 3px; }
.volbar .n { font-size: 35px; letter-spacing: -.025em; margin-right: 3px; font-weight: 400; }
.vol { height: 286px; }
.vol path.g { stroke: #109a10; stroke-width: 4.200; }
.vol path.r { stroke: #e03030; stroke-width: 4.200; opacity: .9; }
.vmax { font: 300 28px "Noto Sans CJK SC"; fill: #999; }
.vn { font: 350 29px Inter; letter-spacing: -1.200px; }
.dates { display: grid; grid-template-columns: repeat(5, 211.500px); width: 1058px; height: 54px; margin-left: 11px; border-bottom: 2px solid #e4e4e4; text-align: center; font-size: 37px; line-height: 52px; color: #999; }
.dates span { padding-left: 7px; letter-spacing: -.04em; }

.promo { height: 277px; background: linear-gradient(#fff2ee, #fefefe 165px); border-bottom: 1px solid #d8d8d8; padding-top: 28px; }
.ask { width: 1014px; height: 105px; margin-left: 33px; border: 2px solid transparent; border-radius: 22px; background: linear-gradient(#fff, #fff) padding-box, linear-gradient(#ebcfc8, #dde6f5) border-box; display: flex; align-items: center; padding: 0 20px 0 18px; }
.ask p { flex: 1; margin-left: 27px; font-size: 39px; color: #999; white-space: nowrap; padding-bottom: 4px; }
.ask p span { letter-spacing: 3px; }
.ai { font: 900 41px "Noto Sans CJK SC"; }
.ai-en { font: 700 47px Inter; }
.hot { width: 1046px; height: 83px; margin: 44px 0 0 17px; border-radius: 42px; background: #fcede4; color: #e05a10; display: flex; align-items: center; padding: 0 35px 0 28px; }
.hot p { flex: 1; margin-left: 32px; font-size: 36px; white-space: nowrap; padding-bottom: 3px; }
.hot p span { letter-spacing: 2px; }
.hot i { width: 1px; height: 33px; background: #e05a10; margin-right: 16px; }

.peek { height: 32px; padding: 26px 68px 0 66px; overflow: hidden; border-bottom: 1px solid #d0d0d0; display: flex; justify-content: space-between; font-size: 36px; color: #555; }
.peek .cur { color: #e05a10; font-weight: 400; }

.dock { height: 124px; background: #f7f8fa; display: flex; font-size: 35px; color: #666; }
.index { width: 252px; display: flex; flex-direction: column; align-items: center; padding-top: 9px; color: #d92e2e; }
.index > b { font-size: 41px; line-height: 57px; letter-spacing: -.055em; font-weight: 400; }
.index div { display: flex; align-items: center; gap: 40px; height: 46px; margin-left: 32px; margin-top: -9px; }
.index span { color: #666; }
.index div b { font-size: 38px; letter-spacing: -.065em; padding-top: 3px; font-weight: 400; }
.act { width: 207px; display: flex; flex-direction: column; align-items: center; padding: 8px 1px 0 0; }
.act span { margin-top: 13px; }

.sysnav { height: 130px; display: flex; justify-content: center; gap: 195px; padding-top: 39px; padding-right: 11px; }
```
